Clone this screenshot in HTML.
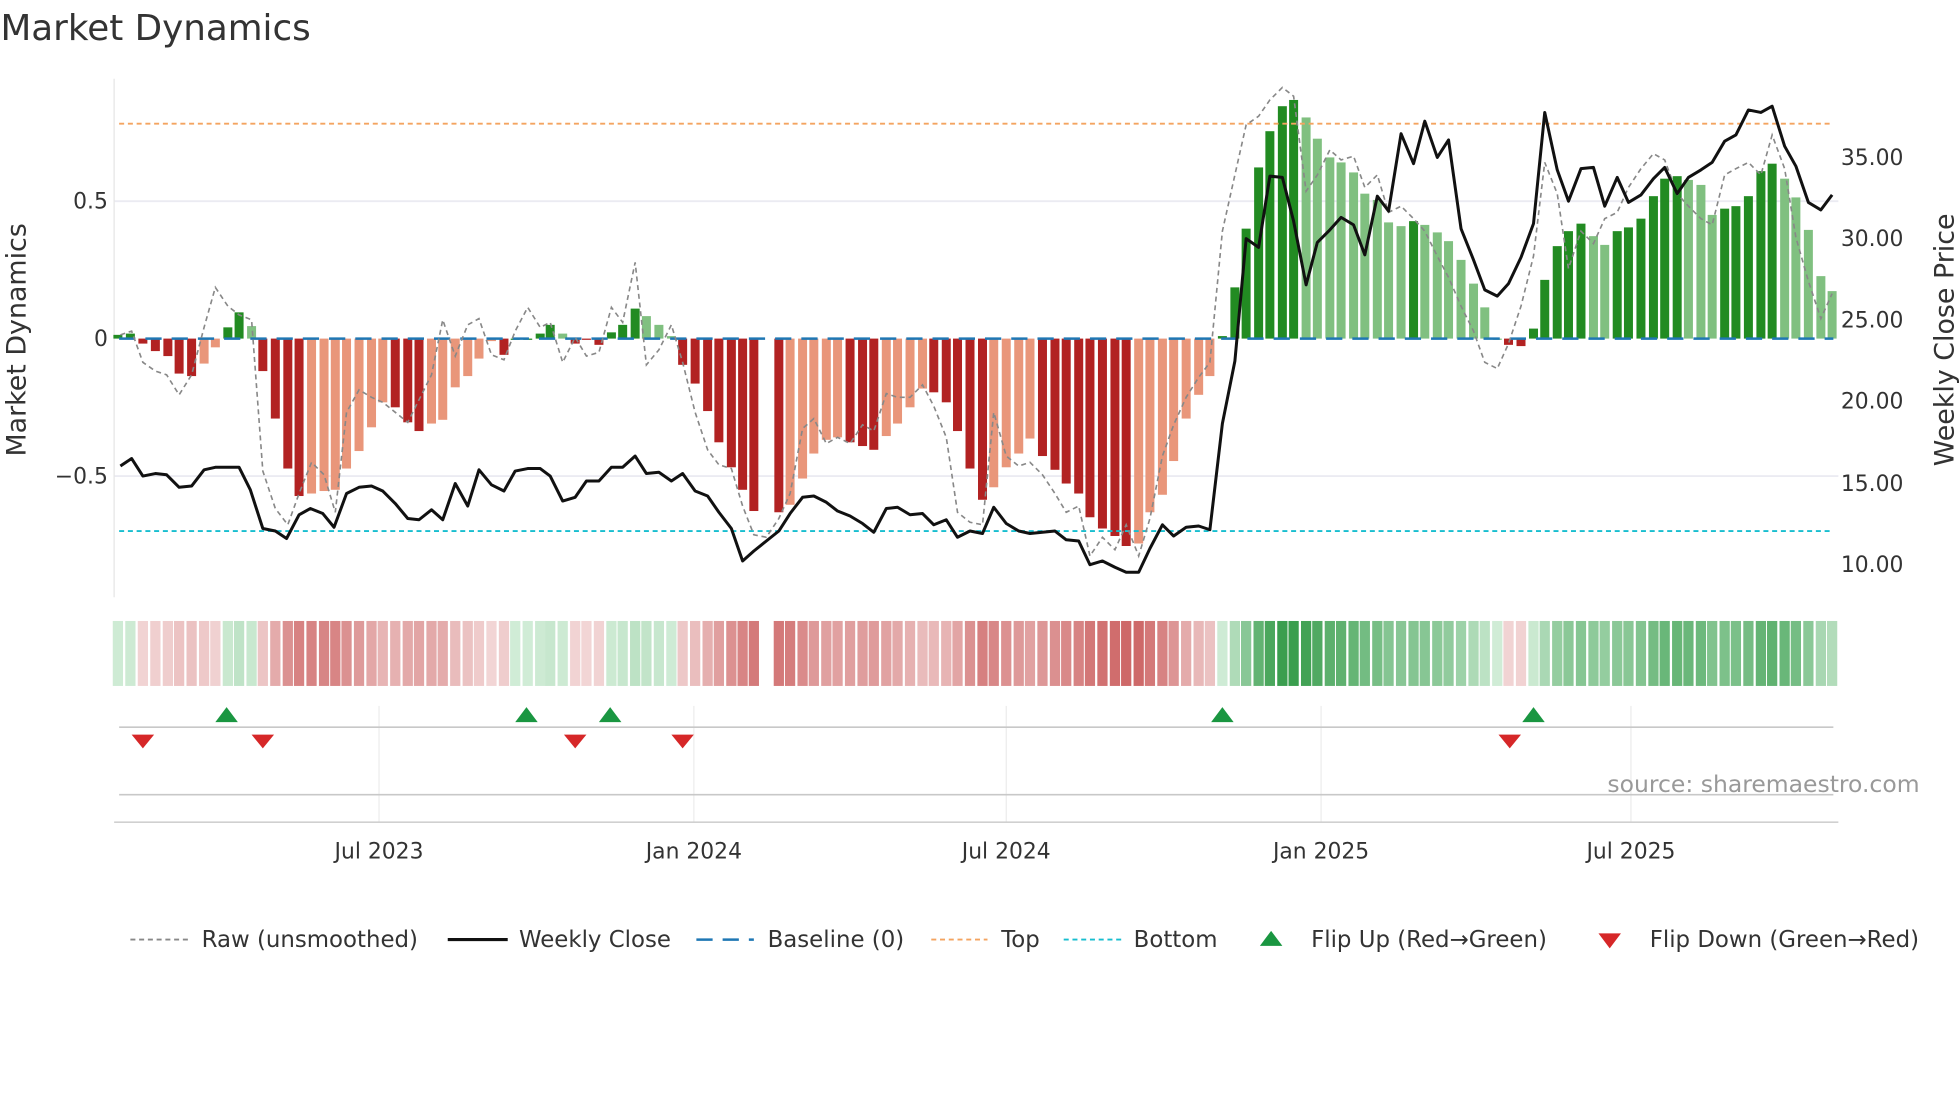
<!DOCTYPE html>
<html><head><meta charset="utf-8"><style>
html,body{margin:0;padding:0;background:#fff;}
svg{display:block;}
text{font-family:"DejaVu Sans","Liberation Sans",sans-serif;}
</style></head><body>
<svg id="s" width="1960" height="1102" viewBox="0 0 1568 882" xmlns="http://www.w3.org/2000/svg">
<rect width="1568" height="882" fill="#fff"/>
<text x="0" y="32" font-size="28.6" fill="#333">Market Dynamics</text>
<line x1="91" y1="161" x2="1471" y2="161" stroke="#ebebf2" stroke-width="1.5"/>
<line x1="91" y1="381" x2="1471" y2="381" stroke="#ebebf2" stroke-width="1.5"/>
<line x1="91" y1="63" x2="91" y2="478" stroke="#e6e6e6" stroke-width="1"/>
<g id="bars"></g>
<line x1="95" y1="99" x2="1467" y2="99" stroke="#f4a460" stroke-width="1.5" stroke-dasharray="4,3"/>
<line x1="95" y1="425" x2="1467" y2="425" stroke="#17becf" stroke-width="1.5" stroke-dasharray="4,3"/>
<line x1="95" y1="271" x2="1467" y2="271" stroke="#1f77b4" stroke-width="2" stroke-dasharray="13,8"/>
<polyline id="raw" fill="none" stroke="#888" stroke-width="1.3" stroke-dasharray="4,3"/>
<polyline id="px" fill="none" stroke="#111" stroke-width="2.4" stroke-linejoin="round"/>
<g font-size="17.5" fill="#333">
<text x="86" y="167" text-anchor="end">0.5</text>
<text x="86" y="277" text-anchor="end">0</text>
<text x="86" y="387" text-anchor="end">−0.5</text>
<text x="1473" y="132">35.00</text>
<text x="1473" y="197">30.00</text>
<text x="1473" y="262">25.00</text>
<text x="1473" y="327">20.00</text>
<text x="1473" y="393">15.00</text>
<text x="1473" y="458">10.00</text>
</g>
<text transform="translate(20,272) rotate(-90)" font-size="21.5" fill="#333" text-anchor="middle">Market Dynamics</text>
<text transform="translate(1563,272) rotate(-90)" font-size="21.5" fill="#333" text-anchor="middle">Weekly Close Price</text>
<g id="strip"></g>
<g stroke="#ececec" stroke-width="1">
<line x1="303" y1="565" x2="303" y2="658"/><line x1="555" y1="565" x2="555" y2="658"/><line x1="805" y1="565" x2="805" y2="658"/><line x1="1057" y1="565" x2="1057" y2="658"/><line x1="1305" y1="565" x2="1305" y2="658"/>
</g>
<line x1="95" y1="582" x2="1467" y2="582" stroke="#c8c8c8" stroke-width="1.3"/>
<line x1="95" y1="636" x2="1467" y2="636" stroke="#c8c8c8" stroke-width="1.3"/>
<line x1="91" y1="658" x2="1471" y2="658" stroke="#d0d0d0" stroke-width="1.3"/>
<g id="tri"></g>
<text x="1536" y="634" font-size="18.8" fill="#999" text-anchor="end">source: sharemaestro.com</text>
<g font-size="17.5" fill="#333" text-anchor="middle">
<text x="303" y="687">Jul 2023</text><text x="555" y="687">Jan 2024</text><text x="805" y="687">Jul 2024</text><text x="1057" y="687">Jan 2025</text><text x="1305" y="687">Jul 2025</text>
</g>
<g font-size="18.3" fill="#333">
<line x1="104" y1="752" x2="150" y2="752" stroke="#888" stroke-width="1.5" stroke-dasharray="4,3"/>
<text x="161" y="758">Raw (unsmoothed)</text>
<line x1="358" y1="752" x2="406" y2="752" stroke="#111" stroke-width="2.5"/>
<text x="415" y="758">Weekly Close</text>
<line x1="557" y1="752" x2="603" y2="752" stroke="#1f77b4" stroke-width="2" stroke-dasharray="13,8"/>
<text x="614" y="758">Baseline (0)</text>
<line x1="745" y1="752" x2="790" y2="752" stroke="#f4a460" stroke-width="1.5" stroke-dasharray="4,3"/>
<text x="801" y="758">Top</text>
<line x1="851" y1="752" x2="897" y2="752" stroke="#17becf" stroke-width="1.5" stroke-dasharray="4,3"/>
<text x="907" y="758">Bottom</text>
<polygon points="1008,757 1026,757 1017,745" fill="#1a9641"/>
<text x="1049" y="758">Flip Up (Red→Green)</text>
<polygon points="1279,747 1297,747 1288,759" fill="#d62728"/>
<text x="1320" y="758">Flip Down (Green→Red)</text>
</g>
</svg>
<script>
var B=[[94,268,'G'],[104,267,'G'],[114,275,'R'],[124,281,'R'],[134,285,'R'],[143,299,'R'],[153,301,'R'],[163,291,'S'],[172,278,'S'],[182,262,'G'],[191,250,'G'],[201,261,'L'],[210,297,'R'],[220,335,'R'],[230,375,'R'],[239,397,'R'],[249,395,'S'],[259,393,'S'],[268,392,'S'],[277,375,'S'],[287,361,'S'],[297,342,'S'],[306,322,'S'],[316,326,'R'],[326,338,'R'],[335,345,'R'],[345,339,'S'],[354,336,'S'],[364,310,'S'],[374,301,'S'],[383,287,'S'],[393,273,'S'],[403,284,'R'],[412,271,'G'],[422,271,'G'],[432,267,'G'],[440,260,'G'],[450,267,'L'],[460,275,'R'],[469,272,'R'],[479,276,'R'],[489,266,'G'],[498,260,'G'],[508,247,'G'],[517,253,'L'],[527,260,'L'],[537,269,'L'],[546,292,'R'],[556,307,'R'],[566,329,'R'],[575,354,'R'],[585,374,'R'],[594,392,'R'],[603,409,'R'],[623,410,'R'],[632,404,'S'],[642,383,'S'],[651,363,'S'],[661,352,'S'],[670,350,'S'],[680,354,'R'],[690,357,'R'],[699,360,'R'],[709,349,'S'],[718,339,'S'],[728,326,'S'],[738,311,'S'],[747,314,'R'],[757,322,'R'],[766,345,'R'],[776,375,'R'],[786,400,'R'],[795,390,'S'],[805,374,'S'],[815,363,'S'],[824,351,'S'],[834,365,'R'],[844,376,'R'],[853,387,'R'],[863,395,'R'],[872,414,'R'],[882,423,'R'],[892,429,'R'],[901,437,'R'],[911,435,'S'],[920,410,'S'],[930,396,'S'],[939,369,'S'],[949,335,'S'],[959,316,'S'],[968,301,'S'],[978,269,'G'],[988,230,'G'],[997,183,'G'],[1007,134,'G'],[1016,105,'G'],[1026,85,'G'],[1035,80,'G'],[1045,94,'L'],[1054,111,'L'],[1064,126,'L'],[1073,130,'L'],[1083,138,'L'],[1092,155,'L'],[1102,160,'L'],[1111,178,'L'],[1121,181,'L'],[1131,177,'G'],[1140,180,'L'],[1150,186,'L'],[1159,193,'L'],[1169,208,'L'],[1179,227,'L'],[1188,246,'L'],[1198,271,'L'],[1207,276,'R'],[1217,277,'R'],[1227,263,'G'],[1236,224,'G'],[1246,197,'G'],[1255,185,'G'],[1265,179,'G'],[1275,189,'L'],[1284,196,'L'],[1294,185,'G'],[1303,182,'G'],[1313,175,'G'],[1323,157,'G'],[1332,143,'G'],[1342,141,'G'],[1351,144,'L'],[1361,148,'L'],[1370,172,'L'],[1380,167,'G'],[1389,165,'G'],[1399,157,'G'],[1409,137,'G'],[1418,131,'G'],[1428,143,'L'],[1437,158,'L'],[1447,184,'L'],[1457,221,'L'],[1466,233,'L']];
var C={R:'#b22222',S:'#e9967a',G:'#228b22',L:'#80c080'};
function lerp(a,b,t){return 'rgb('+a.map(function(v,i){return Math.round(v+(b[i]-v)*t)}).join(',')+')';}
var bh='',sh='';
B.forEach(function(b){
 var x=b[0],t=b[1],y=Math.min(t,271),h=Math.max(Math.abs(271-t),1);
 bh+='<rect x="'+(x-3.6)+'" y="'+y+'" width="7.2" height="'+h+'" fill="'+C[b[2]]+'"/>';
 var v=(271-t)/220,col;
 if(b[2]=='G'||b[2]=='L'){var k=Math.min(Math.max(v/0.85,0),1);col=lerp([208,236,214],[58,158,78],k);}
 else{var k=Math.min(Math.max(-v/0.75,0),1);col=lerp([242,214,214],[206,104,104],k);}
 sh+='<rect x="'+(x-4.1)+'" y="497" width="8.2" height="52" fill="'+col+'"/>';
});
document.getElementById('bars').innerHTML=bh;
document.getElementById('strip').innerHTML=sh;
document.getElementById('px').setAttribute('points',"96,373 105,367 114,381 124,379 133,380 143,390 153,389 163,376 172,374 191,374 200,392 210,423 220,425 229,431 239,412 248,407 258,411 267,422 277,395 287,390 297,389 306,393 316,403 326,415 335,416 345,408 354,416 364,387 374,405 383,376 393,388 403,393 412,377 422,375 432,375 440,381 450,401 460,398 469,385 479,385 489,374 498,374 508,365 517,379 527,378 537,385 546,379 556,393 566,397 575,410 585,423 594,449 603,441 613,433 623,425 632,411 642,398 651,397 661,402 670,409 680,413 690,419 699,426 709,407 718,406 728,412 738,411 747,420 757,416 766,430 776,425 786,427 795,406 805,419 815,425 824,427 834,426 844,425 853,432 863,433 872,452 882,449 892,454 901,458 911,458 920,439 930,420 939,429 949,422 959,421 968,424 978,339 988,289 997,191 1007,198 1016,141 1026,142 1035,177 1045,228 1054,194 1064,184 1073,174 1083,180 1092,204 1102,157 1111,169 1121,107 1131,131 1140,97 1150,126 1159,112 1169,183 1179,208 1188,232 1198,237 1207,227 1217,206 1227,179 1236,90 1246,136 1255,161 1265,135 1275,134 1284,165 1294,142 1303,162 1313,156 1323,143 1332,134 1342,155 1351,142 1361,136 1370,130 1380,113 1389,108 1399,88 1409,90 1418,85 1428,117 1437,133 1447,162 1457,168 1466,156");
document.getElementById('raw').setAttribute('points',"96,268 105,265 114,290 124,297 133,300 143,316 153,300 163,262 172,230 182,245 191,252 201,256 210,377 220,407 230,420 239,395 249,370 259,380 268,410 277,330 287,312 297,318 306,322 316,330 326,338 335,320 345,300 354,256 364,285 374,260 383,255 393,284 403,288 412,265 422,246 432,262 440,258 450,290 460,270 469,285 479,282 489,246 498,258 508,210 517,292 527,280 537,260 546,290 556,330 566,360 575,372 585,375 594,405 603,428 613,430 623,415 632,395 642,343 651,335 661,355 670,350 680,355 690,340 699,345 709,315 718,318 728,318 738,308 747,325 757,350 766,410 776,418 786,420 795,330 805,365 815,373 824,370 834,380 844,395 853,410 863,405 872,445 882,430 892,440 901,420 911,445 920,415 930,365 939,340 949,318 959,302 968,290 978,185 988,140 997,100 1007,93 1016,80 1026,70 1035,77 1045,153 1054,140 1064,120 1073,128 1083,125 1092,150 1102,140 1111,170 1121,165 1131,175 1140,185 1150,205 1159,222 1169,245 1179,265 1188,290 1198,295 1207,275 1217,245 1227,205 1236,130 1246,155 1255,215 1265,185 1275,195 1284,175 1294,170 1303,150 1313,135 1323,123 1332,128 1342,155 1351,165 1361,175 1370,180 1380,140 1389,135 1399,130 1409,140 1418,108 1428,135 1437,190 1447,225 1457,255 1466,235");
var t='';
[181,421,488,978,1227].forEach(function(x){t+='<polygon points="'+(x-9)+',578 '+(x+9)+',578 '+x+',566" fill="#1a9641"/>';});
[114,210,460,546,1208].forEach(function(x){t+='<polygon points="'+(x-9)+',588 '+(x+9)+',588 '+x+',599" fill="#d62728"/>';});
document.getElementById('tri').innerHTML=t;
</script>
</body></html>
